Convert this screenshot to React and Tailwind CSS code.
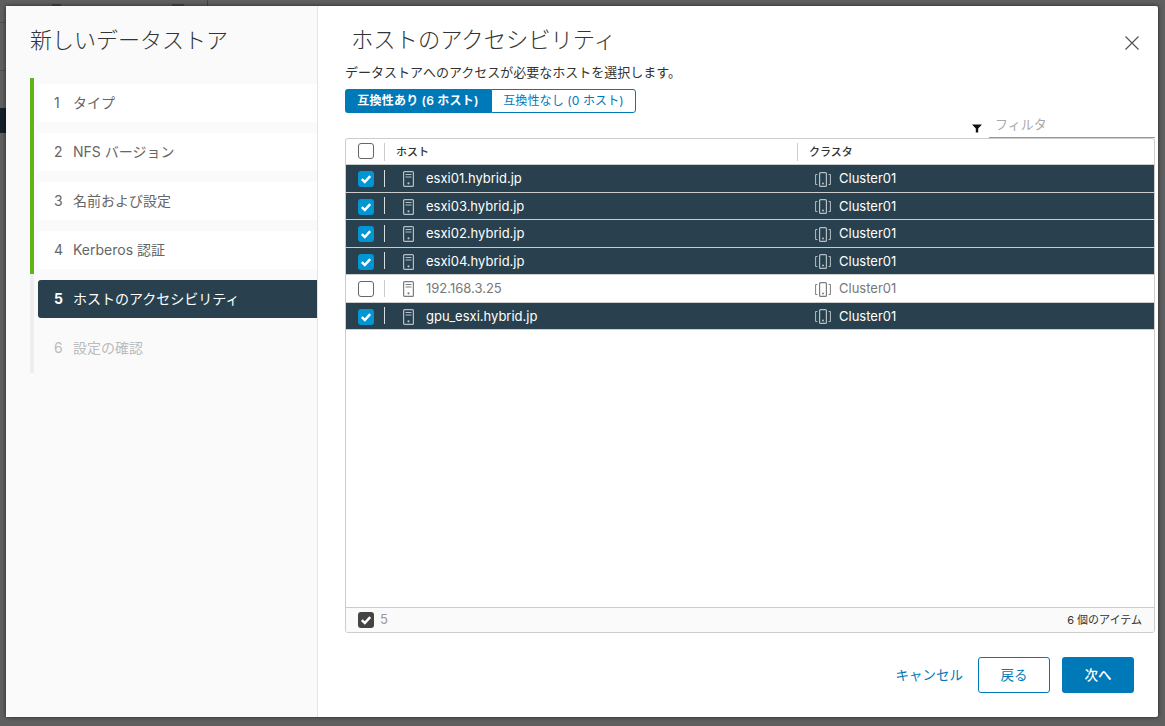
import React from "react";

const FONT = "font-['Inter','Noto_Sans_CJK_JP',sans-serif]";

function Check({ className = "" }) {
  return (
    <svg viewBox="0 0 16 16" className={className} fill="none">
      <path d="M3.8 8.2 6.8 11 12.2 5.2" stroke="white" strokeWidth="2.5" />
    </svg>
  );
}

function Box({ checked }) {
  return checked ? (
    <span className="flex w-4 h-4 rounded-[3px] bg-[#0095d3] items-center justify-center">
      <Check className="w-4 h-4" />
    </span>
  ) : (
    <span className="block w-4 h-4 rounded-[3px] border border-[#666] bg-white" />
  );
}

function HostIcon({ color }) {
  return (
    <svg viewBox="0 0 11 16" className="w-[11px] h-4 shrink-0" fill="none" stroke={color} strokeWidth="1.2">
      <rect x="0.6" y="0.6" width="9.8" height="14.8" rx="1" />
      <path d="M2.5 3.5h6M2.5 6h6" strokeWidth="1" />
      <circle cx="5.5" cy="12.3" r="1.1" fill={color} stroke="none" />
    </svg>
  );
}

function ClusterIcon({ color }) {
  return (
    <svg viewBox="0 0 16 15" className="w-4 h-[15px] shrink-0" fill="none" stroke={color} strokeWidth="1.2">
      <rect x="4.6" y="0.6" width="6.8" height="13.8" rx="1" />
      <circle cx="8" cy="11.4" r="1" fill={color} stroke="none" />
      <path d="M2.4 2.5H0.6v10h1.8M13.6 2.5h1.8v10h-1.8" strokeWidth="1" />
    </svg>
  );
}

const steps = [
  ["1", "タイプ", "done"],
  ["2", "NFS バージョン", "done"],
  ["3", "名前および設定", "done"],
  ["4", "Kerberos 認証", "done"],
  ["5", "ホストのアクセシビリティ", "active"],
  ["6", "設定の確認", "todo"],
];

const rows = [
  ["esxi01.hybrid.jp", true],
  ["esxi03.hybrid.jp", true],
  ["esxi02.hybrid.jp", true],
  ["esxi04.hybrid.jp", true],
  ["192.168.3.25", false],
  ["gpu_esxi.hybrid.jp", true],
];

function Step({ n, label, state }) {
  const tone =
    state === "active"
      ? "bg-[#29414e] text-white rounded-l-[3px]"
      : state === "done"
      ? "bg-white text-[#666] rounded-l-[3px]"
      : "text-[#bbb]";
  return (
    <div className={`h-[38px] pb-[2px] mb-[11px] last:mb-0 flex items-center text-[14px] ${tone}`}>
      <span className={`w-[35px] pl-4 ${state === "active" ? "font-bold" : ""}`}>{n}</span>
      <span>{label}</span>
    </div>
  );
}

function Row({ name, checked }) {
  const text = checked ? "text-white" : "text-[#777]";
  const icon = checked ? "#b4c0c6" : "#7c7c7c";
  return (
    <div className={`flex items-center h-[26.5px] border-b border-[#ccc] box-content text-[13px] ${checked ? "bg-[#29414e]" : "bg-white"} ${text}`}>
      <div className="w-[38px] pl-3 pt-[1.5px] flex items-center h-full shrink-0">
        <Box checked={checked} />
      </div>
      <span className={`w-px h-[17px] ${checked ? "bg-[#d5dde1]" : "bg-[#ccc]"}`} />
      <div className="w-[413px] pl-[18px] pt-[1.5px] flex items-center gap-3 shrink-0">
        <HostIcon color={icon} />
        <span>{name}</span>
      </div>
      <div className="pl-[17px] pt-[1.5px] flex items-center gap-2">
        <ClusterIcon color={icon} />
        <span>Cluster01</span>
      </div>
    </div>
  );
}

export default function App() {
  return (
    <div className={`relative h-[726px] w-[1165px] overflow-hidden bg-[#5f5f5f] pt-[6px] pl-[6px] ${FONT}`}>
      <div className="absolute left-0 top-[22px] w-[6px] h-px bg-[#4e4e4e]" />
      <div className="absolute left-0 top-[70px] w-[6px] h-px bg-[#4e4e4e]" />
      <div className="absolute left-0 top-[108px] w-[6px] h-[25px] bg-[#14202a]" />
      <div className="absolute left-[207px] top-0 w-px h-[6px] bg-[#444]" />
      <div className="absolute left-[52px] top-[4px] w-[9px] h-[2px] bg-[#444]" />
      <div className="absolute left-[172px] top-[4px] w-[12px] h-[2px] bg-[#444]" />
      <div className="relative w-[1152px] h-[711px] bg-white flex shadow-[0_0_4px_rgba(0,0,0,0.6)] rounded-[2px]">
        <aside className="w-[312px] shrink-0 bg-[#fafafa] border-r border-[#e4e4e4] pl-6">
          <h1 className="text-[22px] font-light leading-[28px] mt-5 text-[#333] h-[52px]">新しいデータストア</h1>
          <div className="flex">
            <div className="w-1 h-[295px] flex flex-col">
              <div className="h-[196px] bg-[#60b515]" />
              <div className="flex-1 bg-[#eee]" />
            </div>
            <div className="flex-1 pl-1 pt-[6px]">
              {steps.map(([n, l, s]) => (
                <Step key={n} n={n} label={l} state={s} />
              ))}
            </div>
          </div>
        </aside>
        <main className="flex-1 relative pl-[27px] pr-[3px] text-[#333]">
          <h2 className="text-[22.3px] font-light leading-[28px] mt-5 pl-[6px] h-[32px]">ホストのアクセシビリティ</h2>
          <button className="absolute right-[18px] top-[29px]" aria-label="close">
            <svg viewBox="0 0 16 16" className="w-4 h-4" fill="none" stroke="#555" strokeWidth="1.2">
              <path d="M1.5 1.5 14.5 14.5M14.5 1.5 1.5 14.5" />
            </svg>
          </button>
          <p className="text-[13px] leading-[16px] mt-[6px] text-[#333]">データストアへのアクセスが必要なホストを選択します。</p>
          <div className="flex mt-[9px] h-6 w-[291px] text-[12px]">
            <div className="w-[146px] bg-[#0079b8] text-white rounded-l-[3px] flex items-center justify-center font-semibold tracking-[0.2px]">互換性あり (6 ホスト)</div>
            <div className="flex-1 border border-[#0079b8] text-[#0079b8] rounded-r-[3px] flex items-center justify-center tracking-[0.12px]">互換性なし (0 ホスト)</div>
          </div>
          <div className="flex justify-end items-center h-[26px]">
            <svg viewBox="0 0 10 9" className="w-[10px] h-[9px] mr-[7px] mt-[5px]">
              <path d="M0 0.5h10L6.2 4.5V8.5H3.8V4.5z" fill="#111" />
            </svg>
            <div className="w-[166px] h-[25px] border-b border-[#999] pl-[6px] text-[13px] leading-[22px] text-[#aaa] -mt-[2px]">フィルタ</div>
          </div>
          <div className="w-[810px] h-[495px] -mt-[1px] border border-[#ccc] rounded-[3px] flex flex-col overflow-hidden">
            <div className="h-[25px] flex items-center border-b border-[#ccc] box-content text-[11px] text-[#333] font-medium shrink-0">
              <div className="w-[38px] pl-3 pb-px shrink-0 flex items-center">
                <Box checked={false} />
              </div>
              <span className="w-px h-[18px] bg-[#ccc]" />
              <div className="w-[412px] pl-[11px] pt-[2px] shrink-0">ホスト</div>
              <span className="w-px h-[18px] bg-[#ccc]" />
              <div className="pl-[11px] pt-[2px]">クラスタ</div>
            </div>
            <div className="flex-1">
              {rows.map(([n, c]) => (
                <Row key={n} name={n} checked={c} />
              ))}
            </div>
            <div className="h-[24px] border-t border-[#ccc] box-content bg-[#fafafa] flex items-center pl-3 pr-3 shrink-0">
              <span className="flex w-4 h-4 rounded-[3px] bg-[#444] items-center justify-center">
                <Check className="w-4 h-4" />
              </span>
              <span className="ml-[6px] text-[13px] text-[#999]">5</span>
              <span className="ml-auto text-[11px] text-[#333]">6 個のアイテム</span>
            </div>
          </div>
          <div className="flex justify-end items-center mt-[24px] w-[789px] text-[13.5px]">
            <span className="text-[#0079b8] mr-[15px]">キャンセル</span>
            <button className="w-[72px] h-9 border border-[#0079b8] rounded-[3px] text-[#0079b8] bg-white mr-3">戻る</button>
            <button className="w-[72px] h-9 rounded-[3px] bg-[#0079b8] text-white font-medium">次へ</button>
          </div>
        </main>
      </div>
    </div>
  );
}
